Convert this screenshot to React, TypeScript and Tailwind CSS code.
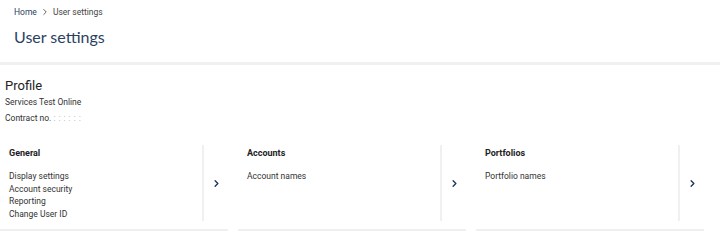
import { ChevronRight } from "lucide-react"

const cards = [
  { title: "General", items: ["Display settings", "Account security", "Reporting", "Change User ID"] },
  { title: "Accounts", items: ["Account names"] },
  { title: "Portfolios", items: ["Portfolio names"] },
]

function SettingsCard({ title, items }: { title: string; items: string[] }) {
  return (
    <div className="pb-[8px] border-b-2 border-[#efefef]">
      <div className="flex h-[76px]">
        <div className="flex-1 pl-[9px] pt-[2px] border-r-2 border-[#f0f0f0]">
          <h3 className="text-[9px] leading-[12px] font-bold text-[#222]">{title}</h3>
          <ul className="mt-[11px] text-[8.5px] leading-[12.5px] text-[#333]">
            {items.map((item) => (
              <li key={item}>{item}</li>
            ))}
          </ul>
        </div>
        <div className="w-[24px] flex items-center justify-center">
          <ChevronRight className="w-[11px] h-[11px] text-[#1f3560]" strokeWidth={3} />
        </div>
      </div>
    </div>
  )
}

export default function App() {
  return (
    <main className="w-[720px] h-[240px] overflow-hidden bg-white font-['Roboto',sans-serif]">
      <header className="h-[62px] px-[14px] pt-[7px]">
        <nav className="flex items-center gap-[3px] text-[8.5px] leading-[10px] text-[#444]">
          <span className="text-[#2b3f63]">Home</span>
          <ChevronRight className="w-[10px] h-[10px] text-[#444]" strokeWidth={2} />
          <span>User settings</span>
        </nav>
        <h1 className="mt-[9px] text-[16px] leading-[22px] text-[#2b3f63] font-['Lato',sans-serif]">
          User settings
        </h1>
      </header>
      <div className="h-[3px] bg-[#f0f0f0]" />

      <section className="pl-[5px] pt-[13px]">
        <h2 className="text-[13px] leading-[16px] text-[#222]">Profile</h2>
        <p className="text-[8.5px] leading-[16px] text-[#333]">Services Test Online</p>
        <p className="text-[8.5px] leading-[16px] text-[#333]">
          Contract no. <span className="text-[#aaa] tracking-[3px]">::::::</span>
        </p>
      </section>

      <div className="mt-[19px] grid grid-cols-3 gap-[10px] pr-[16px]">
        {cards.map((c) => (
          <SettingsCard key={c.title} title={c.title} items={c.items} />
        ))}
      </div>
    </main>
  )
}
